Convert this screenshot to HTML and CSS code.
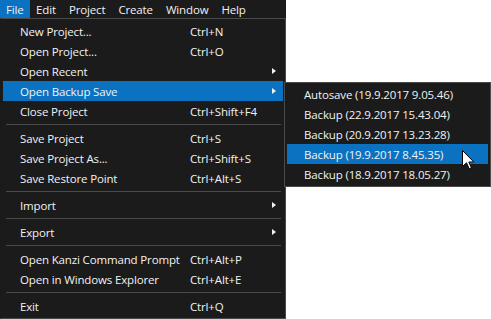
FILE: index.html
```html
<!DOCTYPE html>
<html>
<head>
<meta charset="utf-8">
<link rel="stylesheet" href="styles.css">
</head>
<body>
<div class="app">
  <div class="menubar">
    <span class="mb-item active">File</span>
    <span class="mb-item">Edit</span>
    <span class="mb-item">Project</span>
    <span class="mb-item">Create</span>
    <span class="mb-item">Window</span>
    <span class="mb-item">Help</span>
  </div>
  <div class="menu">
    <div class="item"><span class="label">New Project...</span><span class="key">Ctrl+N</span></div>
    <div class="item"><span class="label">Open Project...</span><span class="key">Ctrl+O</span></div>
    <div class="item"><span class="label">Open Recent</span><span class="key"></span><span class="arrow"></span></div>
    <div class="item hl"><span class="label">Open Backup Save</span><span class="key"></span><span class="arrow"></span></div>
    <div class="item"><span class="label">Close Project</span><span class="key">Ctrl+Shift+F4</span></div>
    <div class="sep"></div>
    <div class="item"><span class="label">Save Project</span><span class="key">Ctrl+S</span></div>
    <div class="item"><span class="label">Save Project As...</span><span class="key">Ctrl+Shift+S</span></div>
    <div class="item"><span class="label">Save Restore Point</span><span class="key">Ctrl+Alt+S</span></div>
    <div class="sep"></div>
    <div class="item"><span class="label">Import</span><span class="key"></span><span class="arrow"></span></div>
    <div class="sep"></div>
    <div class="item"><span class="label">Export</span><span class="key"></span><span class="arrow"></span></div>
    <div class="sep"></div>
    <div class="item"><span class="label">Open Kanzi Command Prompt</span><span class="key">Ctrl+Alt+P</span></div>
    <div class="item"><span class="label">Open in Windows Explorer</span><span class="key">Ctrl+Alt+E</span></div>
    <div class="sep"></div>
    <div class="item"><span class="label">Exit</span><span class="key">Ctrl+Q</span></div>
  </div>
  <div class="submenu">
    <div class="sitem">Autosave (19.9.2017 9.05.46)</div>
    <div class="sitem">Backup (22.9.2017 15.43.04)</div>
    <div class="sitem">Backup (20.9.2017 13.23.28)</div>
    <div class="sitem hl">Backup (19.9.2017 8.45.35)</div>
    <div class="sitem">Backup (18.9.2017 18.05.27)</div>
  </div>
  <svg class="cursor" width="13" height="20" viewBox="0 0 13 20">
    <path d="M0.5 0.5 L0.5 16.5 L4.5 12.8 L7.2 18.8 L9.4 17.8 L6.8 12 L11.8 12 Z" fill="#fff" stroke="#000" stroke-width="1" stroke-linejoin="miter"/>
  </svg>
</div>
</body>
</html>
```
FILE: styles.css
```css
html, body {
  margin: 0;
  padding: 0;
  background: #ffffff;
}
body {
  font-family: "Open Sans", "Noto Sans", sans-serif;
  font-size: 11.5px;
  letter-spacing: -0.15px;
  color: #f2f2f2;
}
.app {
  position: relative;
  width: 491px;
  height: 319px;
}
.menubar {
  display: flex;
  width: 286px;
  height: 18px;
  background: #1b1b1b;
  line-height: 19px;
}
.mb-item {
  padding: 0 6.5px;
  white-space: nowrap;
}
.mb-item:first-child {
  padding: 0 6px;
}
.mb-item.active {
  background: #0b72c2;
}
.menu {
  box-sizing: border-box;
  width: 286px;
  height: 301px;
  border: 1px solid #4a4a4a;
  border-left-color: #1b1b1b;
  background: #1b1b1b;
  padding: 2px 2px;
}
.item {
  display: flex;
  align-items: center;
  height: 20px;
  line-height: 21px;
  white-space: nowrap;
}
.item.hl, .sitem.hl {
  background: #0b72c2;
}
.label {
  width: 170px;
  padding-left: 17px;
  flex: none;
}
.key {
  flex: 1;
}
.arrow {
  width: 0;
  height: 0;
  border-top: 3.5px solid transparent;
  border-bottom: 3.5px solid transparent;
  border-left: 4px solid #f2f2f2;
  margin-right: 7px;
}
.sep {
  height: 7px;
  display: flex;
  align-items: center;
  padding: 0 0 0 3px;
}
.sep::before {
  content: "";
  display: block;
  width: 275px;
  height: 1px;
  margin-top: -1px;
  background: #4a4a4a;
}
.submenu {
  position: absolute;
  left: 284px;
  top: 82px;
  width: 207px;
  box-sizing: border-box;
  border: 1px solid #4a4a4a;
  background: #1b1b1b;
  padding: 1px 2px 2px 2px;
}
.sitem {
  height: 20px;
  line-height: 21px;
  padding-left: 17px;
  white-space: nowrap;
}
.cursor {
  position: absolute;
  left: 462px;
  top: 150px;
}
```
